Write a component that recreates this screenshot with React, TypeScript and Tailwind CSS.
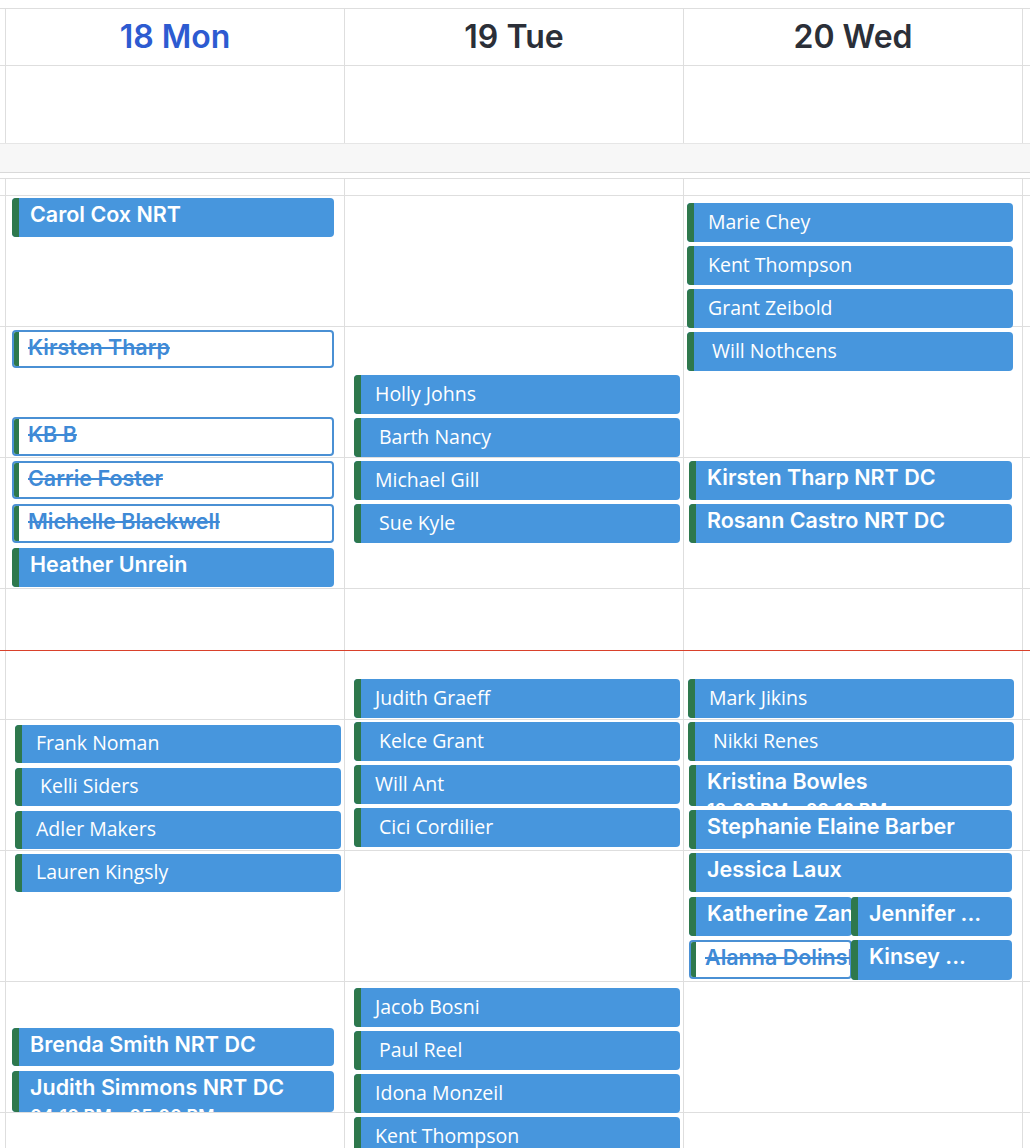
import React from "react";

type Ev = {
  col: number;
  y: number;
  x: number;
  w: number;
  h?: number;
  name: string;
  kind: "bold" | "light";
  cancelled?: boolean;
  indent?: boolean;
  sub?: string;
};

const GRID_TOP = 178;

const days = [
  { label: "18 Mon", today: true },
  { label: "19 Tue", today: false },
  { label: "20 Wed", today: false },
];

const events: Ev[] = [
  // monday
  { col: 0, y: 197, x: 6, w: 322, name: "Carol Cox NRT", kind: "bold" },
  { col: 0, y: 329, x: 6, w: 322, h: 38, name: "Kirsten Tharp", kind: "bold", cancelled: true },
  { col: 0, y: 416, x: 6, w: 322, name: "KB B", kind: "bold", cancelled: true },
  { col: 0, y: 460, x: 6, w: 322, h: 38, name: "Carrie Foster", kind: "bold", cancelled: true },
  { col: 0, y: 503, x: 6, w: 322, h: 39, name: "Michelle Blackwell", kind: "bold", cancelled: true },
  { col: 0, y: 547, x: 6, w: 322, name: "Heather Unrein", kind: "bold" },
  { col: 0, y: 724, x: 9, w: 326, h: 38, name: "Frank Noman", kind: "light" },
  { col: 0, y: 767, x: 9, w: 326, h: 38, name: "Kelli Siders", kind: "light", indent: true },
  { col: 0, y: 810, x: 9, w: 326, h: 38, name: "Adler Makers", kind: "light" },
  { col: 0, y: 853, x: 9, w: 326, h: 38, name: "Lauren Kingsly", kind: "light" },
  { col: 0, y: 1027, x: 6, w: 322, h: 38, name: "Brenda Smith NRT DC", kind: "bold" },
  { col: 0, y: 1070, x: 6, w: 322, h: 41, name: "Judith Simmons NRT DC", kind: "bold", sub: "04:10 PM - 05:00 PM" },
  // tuesday
  { col: 1, y: 374, x: 9, w: 326, name: "Holly Johns", kind: "light" },
  { col: 1, y: 417, x: 9, w: 326, name: "Barth Nancy", kind: "light", indent: true },
  { col: 1, y: 460, x: 9, w: 326, name: "Michael Gill", kind: "light" },
  { col: 1, y: 503, x: 9, w: 326, name: "Sue Kyle", kind: "light", indent: true },
  { col: 1, y: 678, x: 9, w: 326, name: "Judith Graeff", kind: "light" },
  { col: 1, y: 721, x: 9, w: 326, name: "Kelce Grant", kind: "light", indent: true },
  { col: 1, y: 764, x: 9, w: 326, name: "Will Ant", kind: "light" },
  { col: 1, y: 807, x: 9, w: 326, name: "Cici Cordilier", kind: "light", indent: true },
  { col: 1, y: 987, x: 9, w: 326, name: "Jacob Bosni", kind: "light" },
  { col: 1, y: 1030, x: 9, w: 326, name: "Paul Reel", kind: "light", indent: true },
  { col: 1, y: 1073, x: 9, w: 326, name: "Idona Monzeil", kind: "light" },
  { col: 1, y: 1116, x: 9, w: 326, name: "Kent Thompson", kind: "light" },
  // wednesday
  { col: 2, y: 202, x: 3, w: 326, name: "Marie Chey", kind: "light" },
  { col: 2, y: 245, x: 3, w: 326, name: "Kent Thompson", kind: "light" },
  { col: 2, y: 288, x: 3, w: 326, name: "Grant Zeibold", kind: "light" },
  { col: 2, y: 331, x: 3, w: 326, name: "Will Nothcens", kind: "light", indent: true },
  { col: 2, y: 460, x: 5, w: 323, name: "Kirsten Tharp NRT DC", kind: "bold" },
  { col: 2, y: 503, x: 5, w: 323, name: "Rosann Castro NRT DC", kind: "bold" },
  { col: 2, y: 678, x: 4, w: 326, name: "Mark Jikins", kind: "light" },
  { col: 2, y: 721, x: 4, w: 326, name: "Nikki Renes", kind: "light", indent: true },
  { col: 2, y: 764, x: 5, w: 323, h: 41, name: "Kristina Bowles", kind: "bold", sub: "10:30 PM - 03:10 PM" },
  { col: 2, y: 809, x: 5, w: 323, name: "Stephanie Elaine Barber", kind: "bold" },
  { col: 2, y: 852, x: 5, w: 323, name: "Jessica Laux", kind: "bold" },
  { col: 2, y: 896, x: 5, w: 163, name: "Katherine Zander", kind: "bold" },
  { col: 2, y: 896, x: 167, w: 161, name: "Jennifer ...", kind: "bold" },
  { col: 2, y: 939, x: 5, w: 163, name: "Alanna Dolinsky", kind: "bold", cancelled: true },
  { col: 2, y: 939, x: 167, w: 161, h: 40, name: "Kinsey ...", kind: "bold" },
];

// first strip under the all-day band, then regular slots
const rows = [17, 131, 131, 131, 131, 131, 131, 131, 131];

const inter = "font-['Inter','Liberation_Sans',sans-serif]";
const openSans = "font-['Open_Sans','Liberation_Sans',sans-serif]";

function EventChip({ ev }: { ev: Ev }) {
  const box = ev.cancelled
    ? "bg-white border-2 border-[#4a90d4] text-[#3f8ad6]"
    : "bg-[#4796dd] text-white";
  return (
    <div
      className={`absolute flex overflow-hidden rounded-[4px] ${box}`}
      style={{ top: ev.y - GRID_TOP, left: ev.x, width: ev.w, height: ev.h ?? 39 }}
    >
      <div className={`w-[7px] shrink-0 bg-[#2e784c] ${ev.cancelled ? "-my-[2px] -ml-[2px]" : ""}`} />
      {ev.kind === "bold" ? (
        <div className={`min-w-0 flex-1 whitespace-nowrap ${ev.cancelled ? "pl-[9px]" : "pl-[11px] pt-[1px]"} ${inter}`}>
          <div className={`text-[21.5px] leading-[30px] font-semibold ${ev.cancelled ? "line-through" : ""}`}>
            {ev.name}
          </div>
          {ev.sub && <div className="mt-[4px] text-[18px] leading-[22px] font-semibold">{ev.sub}</div>}
        </div>
      ) : (
        <div
          className={`flex min-w-0 flex-1 items-center whitespace-nowrap pb-[2px] text-[19.5px] ${openSans} ${
            ev.indent ? "pl-[18px]" : "pl-[14px]"
          }`}
        >
          {ev.name}
        </div>
      )}
    </div>
  );
}

function DayColumn({ index }: { index: number }) {
  return (
    <div className="relative w-[339px] border-r border-[#dedede]">
      {rows.map((h, i) => (
        <div key={i} className="border-b border-[#dedede]" style={{ height: h }} />
      ))}
      {events
        .filter((e) => e.col === index)
        .map((e, i) => (
          <EventChip key={i} ev={e} />
        ))}
    </div>
  );
}

function FillerColumn({ className }: { className: string }) {
  return (
    <div className={className}>
      {rows.map((h, i) => (
        <div key={i} className="border-b border-[#dedede]" style={{ height: h }} />
      ))}
    </div>
  );
}

export default function App() {
  return (
    <div className={`h-[1148px] w-[1030px] overflow-hidden bg-white pt-[8px] ${inter}`}>
      {/* day headers */}
      <div className="flex h-[58px] border-y border-[#dedede]">
        <div className="w-[6px] border-r border-[#dedede]" />
        {days.map((d) => (
          <div
            key={d.label}
            className={`flex w-[339px] items-center justify-center border-r border-[#dedede] text-[32px] font-semibold ${
              d.today ? "text-[#2d5bd1]" : "text-[#2b2f38]"
            }`}
          >
            {d.label}
          </div>
        ))}
        <div className="flex-1" />
      </div>

      {/* all-day row */}
      <div className="flex h-[77px]">
        <div className="w-[6px] border-r border-[#dedede]" />
        {days.map((d) => (
          <div key={d.label} className="w-[339px] border-r border-[#dedede]" />
        ))}
        <div className="flex-1" />
      </div>

      <div className="h-[30px] border-y border-t-[#e6e6e6] border-b-[#d9d9d9] bg-[#f7f7f7]" />
      <div className="h-[5px]" />

      {/* time grid */}
      <div className="relative flex border-t border-[#dedede]">
        <FillerColumn className="w-[6px] border-r border-[#dedede]" />
        {days.map((d, i) => (
          <DayColumn key={d.label} index={i} />
        ))}
        <FillerColumn className="flex-1" />
        <div className="pointer-events-none absolute left-0 right-0 top-[471px] h-px bg-[#d9412b]" />
      </div>
    </div>
  );
}
